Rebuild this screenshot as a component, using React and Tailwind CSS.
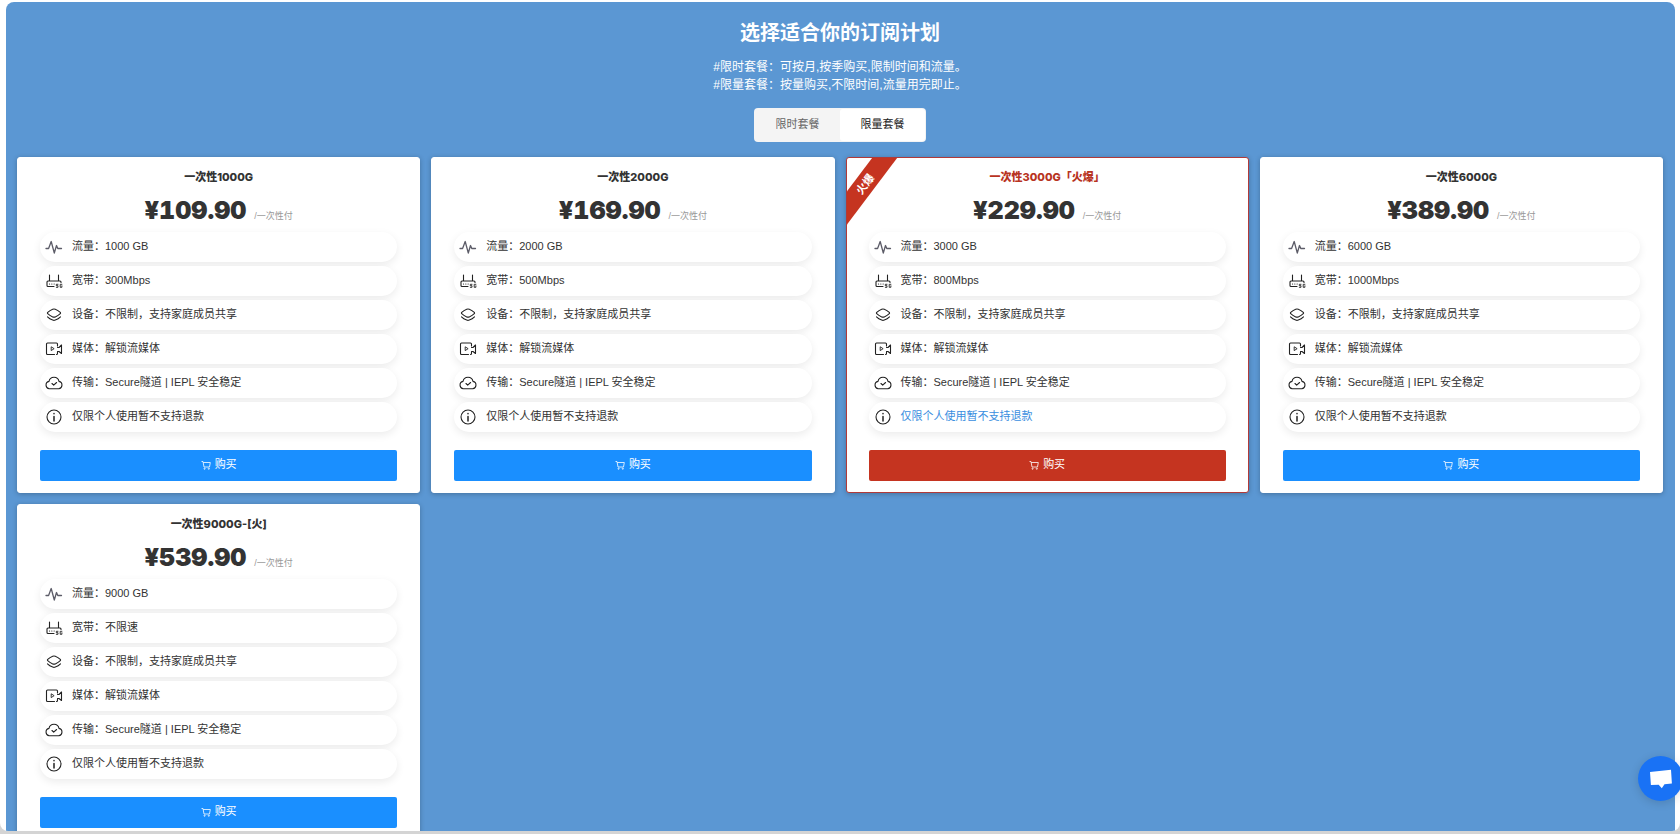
import React, { useState } from 'react'
import clsx from 'clsx'

const plans = [
  { id: 1, name: '一次性1000G', price: '109.90', traffic: '1000 GB', speed: '300Mbps' },
  { id: 2, name: '一次性2000G', price: '169.90', traffic: '2000 GB', speed: '500Mbps' },
  { id: 3, name: '一次性3000G「火爆」', price: '229.90', traffic: '3000 GB', speed: '800Mbps', hot: true },
  { id: 4, name: '一次性6000G', price: '389.90', traffic: '6000 GB', speed: '1000Mbps' },
  { id: 5, name: '一次性9000G-[火]', price: '539.90', traffic: '9000 GB', speed: '不限速' },
]

const tabs = ['限时套餐', '限量套餐']

const Icon = ({ children, className }) => (
  <svg
    viewBox="0 0 18 18"
    fill="none"
    stroke="currentColor"
    strokeWidth="1.1"
    strokeLinecap="round"
    strokeLinejoin="round"
    aria-hidden="true"
    className={clsx('size-[18px] shrink-0', className || 'text-[#222]')}
  >
    {children}
  </svg>
)

const PulseIcon = () => (
  <Icon className="text-[#5c5c68]">
    <path d="M1 10.5h2.600L6.200 3.500 9.300 15l2.200-7.500 1.300 3H16.500" strokeWidth="1.300" />
  </Icon>
)

const RouterIcon = () => (
  <Icon>
    <path d="M4.500 3v6M13.500 3v6M9 14.500H3a1 1 0 0 1-1-1V10a1 1 0 0 1 1-1h12a1 1 0 0 1 1 1v.5" />
    <path d="M4.500 12h.1M6.800 12h.1M9.100 12h.1" />
    <path d="M13 12.300h-1.700v1.400H13v1.600h-1.700M16.900 12.300h-1.700v3h1.700v-1.500" strokeWidth="0.900" />
  </Icon>
)

const LayersIcon = () => (
  <Icon>
    <path d="M7.700 3.200C6 3.900 4 5.200 2.700 6.400a.9.9 0 0 0 0 1.300C4 9 6 10.200 7.700 10.900a3.500 3.500 0 0 0 2.600 0c1.700-.7 3.700-1.900 5-3.200a.9.9 0 0 0 0-1.300c-1.300-1.200-3.300-2.500-5-3.200a3.500 3.500 0 0 0-2.600 0Z" />
    <path d="M2.500 10.800c1.300 1.300 3.400 2.600 5.200 3.300a3.500 3.500 0 0 0 2.600 0c1.800-.7 3.900-2 5.200-3.300" />
  </Icon>
)

const VideoIcon = () => (
  <Icon>
    <path d="M12.500 6V4a1 1 0 0 0-1-1h-9a1 1 0 0 0-1 1v9.500a1 1 0 0 0 1 1h7M12.500 12v1.500a1 1 0 0 1-1 1" />
    <path d="M12.500 7.500H14l2.500-2.500v8.500L14 11.500h-1.500" />
    <path d="M6.200 7.200v3.400l2.600-1.700Z" strokeWidth="0.900" />
  </Icon>
)

const CloudIcon = () => (
  <Icon>
    <path d="M4.300 14.700a3.700 3.700 0 0 1-.3-7.300 5.100 5.100 0 0 1 10 0 3.700 3.700 0 0 1-.3 7.300Z" />
    <path d="m7 9.500 1.700 1.700 2.900-2.700" />
  </Icon>
)

const InfoIcon = () => (
  <Icon>
    <circle cx="9" cy="9" r="7" />
    <path d="M9 8.500V13M9 5.600v.2" strokeWidth="1.500" />
  </Icon>
)

const CartIcon = () => (
  <svg viewBox="0 0 10 10" fill="none" stroke="currentColor" strokeWidth="0.8" aria-hidden="true" className="size-[10px]">
    <path d="M0.500 1.500h1.500l1 5.500h5.500l.8-4.500H2.200" />
    <circle cx="3.600" cy="8.700" r=".6" />
    <circle cx="7.800" cy="8.700" r=".6" />
  </svg>
)

const Feature = ({ icon, highlight, children }) => (
  <li className="flex h-[30px] items-center gap-[9px] rounded-full bg-white pb-px pl-[5px] shadow-[0_3px_8px_rgba(0,0,0,0.08)]">
    {icon}
    <span className={highlight ? 'text-[#3a8ee0]' : ''}>{children}</span>
  </li>
)

const PlanCard = ({ plan }) => (
  <article
    className={clsx(
      'relative overflow-hidden rounded-[3px] border bg-white px-[22px] pb-[11px] pt-[11px] shadow-[0_1px_5px_rgba(0,0,0,0.25)]',
      plan.hot ? 'border-[#b03a3a]' : 'border-white'
    )}
  >
    {plan.hot && (
      <span className="absolute -left-[42px] top-4 flex h-5 w-[120px] -rotate-[53deg] items-center justify-center bg-[#c53420] text-[11px] font-bold text-white">
        火爆
      </span>
    )}
    <h2
      className={clsx(
        'text-center font-["Inter","Noto_Sans_CJK_SC",sans-serif] text-[11px] font-extrabold leading-4',
        plan.hot && 'text-[#b8341f]'
      )}
    >
      {plan.name}
    </h2>
    <p className="mt-[9px] flex items-baseline justify-center gap-2">
      <span className="font-['Inter',sans-serif] text-[25px] font-black tabular-nums leading-8">¥{plan.price}</span>
      <span className="text-[9px] text-[#999]">/一次性付</span>
    </p>
    <ul className="mt-[6px] flex flex-col gap-1">
      <Feature icon={<PulseIcon />}>流量：{plan.traffic}</Feature>
      <Feature icon={<RouterIcon />}>宽带：{plan.speed}</Feature>
      <Feature icon={<LayersIcon />}>设备：不限制，支持家庭成员共享</Feature>
      <Feature icon={<VideoIcon />}>媒体：解锁流媒体</Feature>
      <Feature icon={<CloudIcon />}>传输：Secure隧道 | IEPL 安全稳定</Feature>
      <Feature icon={<InfoIcon />} highlight={plan.hot}>仅限个人使用暂不支持退款</Feature>
    </ul>
    <button
      type="button"
      className={clsx(
        'mt-[18px] flex h-[31px] w-full items-center justify-center gap-1 rounded-[2px] pb-0.5 text-white',
        plan.hot ? 'bg-[#c53420]' : 'bg-[#1a8fff]'
      )}
    >
      <CartIcon />
      购买
    </button>
  </article>
)

const App = () => {
  const [activeTab, setActiveTab] = useState(tabs[1])

  return (
    <div className="h-screen bg-[#d4d4d4] pb-[3px] font-['Liberation_Sans','Noto_Sans_CJK_SC',sans-serif] text-[11px] text-[#333]">
      <div className="h-full overflow-hidden rounded-b-lg bg-white pl-[6px] pr-[5px] pt-[2px]">
        <main className="min-h-full rounded-t-lg bg-[#5b97d3] pb-[11px] pl-[11px] pr-3 pt-[17px]">
          <header className="flex flex-col items-center text-white">
            <h1 className="text-xl font-bold leading-7">选择适合你的订阅计划</h1>
            <p className="mt-[11px] text-xs leading-[18px]">
              #限时套餐：可按月,按季购买,限制时间和流量。
              <br />
              #限量套餐：按量购买,不限时间,流量用完即止。
            </p>
            <div className="mt-[14px] flex h-[34px] rounded bg-[#f4f4f4] p-px">
              {tabs.map((tab) => (
                <button
                  key={tab}
                  type="button"
                  onClick={() => setActiveTab(tab)}
                  className={clsx(
                    'w-[85px] rounded-[3px] pb-px',
                    tab === activeTab ? 'bg-white text-[#222]' : 'text-[#666]'
                  )}
                >
                  {tab}
                </button>
              ))}
            </div>
          </header>

          <section className="mt-[15px] grid grid-cols-4 gap-[11px]">
            {plans.map((plan) => (
              <PlanCard key={plan.id} plan={plan} />
            ))}
          </section>
        </main>
      </div>

      <button
        type="button"
        aria-label="在线客服"
        className="fixed -right-[3px] bottom-[33px] flex size-[45px] items-center justify-center rounded-full bg-[#1972f5] shadow-[0_2px_10px_rgba(0,0,0,0.15)]"
      >
        <svg viewBox="0 0 24 24" fill="#fff" aria-hidden="true" className="size-6">
          <path d="m1 5 21-2.300.9 13.800-7.400.7-2.700 4-3.100-3.400-7.800.2Z" />
        </svg>
      </button>
    </div>
  )
}

export default App
